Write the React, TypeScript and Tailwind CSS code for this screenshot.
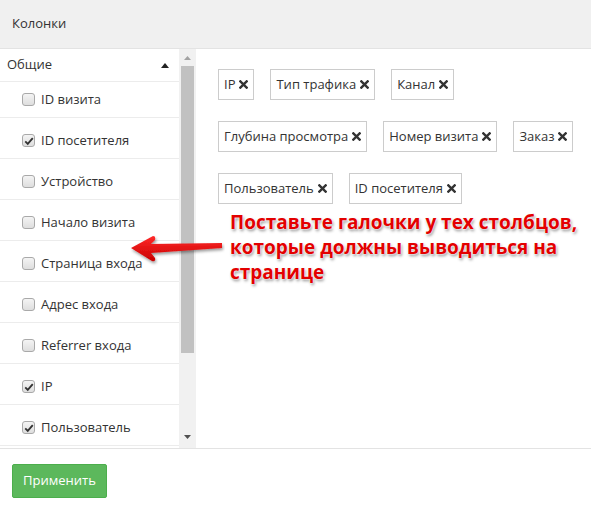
import React from "react";

const font = { fontFamily: '"Open Sans", "Liberation Sans", sans-serif' };

const items: { label: string; checked: boolean }[] = [
  { label: "ID визита", checked: false },
  { label: "ID посетителя", checked: true },
  { label: "Устройство", checked: false },
  { label: "Начало визита", checked: false },
  { label: "Страница входа", checked: false },
  { label: "Адрес входа", checked: false },
  { label: "Referrer входа", checked: false },
  { label: "IP", checked: true },
  { label: "Пользователь", checked: true },
];

const tagRows = [
  ["IP", "Тип трафика", "Канал"],
  ["Глубина просмотра", "Номер визита", "Заказ"],
  ["Пользователь", "ID посетителя"],
];

function Checkbox({ checked }: { checked: boolean }) {
  return (
    <span className="relative flex h-[13px] w-[13px] shrink-0 items-center justify-center rounded-[3px] border border-[#a9a9a9] bg-gradient-to-b from-[#f4f4f4] to-[#dedede]">
      {checked && (
        <svg viewBox="0 0 12 12" className="h-[10px] w-[10px]">
          <path d="M1.5 6.5 L4.5 9.5 L10.5 2.5" fill="none" stroke="#333" strokeWidth="2.2" />
        </svg>
      )}
    </span>
  );
}

function Times() {
  return (
    <svg viewBox="0 0 10 10" className="h-[9px] w-[9px]">
      <path d="M1.5 1.5 L8.5 8.5 M8.5 1.5 L1.5 8.5" stroke="#333" strokeWidth="2.6" strokeLinecap="square" />
    </svg>
  );
}

function Tag({ label }: { label: string }) {
  return (
    <div className="flex h-[31px] items-center gap-[4px] border border-[#cccccc] bg-white px-[5px] text-[13px] text-[#333]">
      <span>{label}</span>
      <Times />
    </div>
  );
}

export default function App() {
  return (
    <div className="relative h-[511px] w-[591px] overflow-hidden bg-white" style={font}>
      <div className="flex h-[49px] items-center border-b border-[#e3e3e3] bg-[#f0f0f0] px-3 text-[13px] text-[#333]">
        Колонки
      </div>

      <div className="flex h-[400px] border-b border-[#e3e3e3]">
        <div className="w-[179px] overflow-hidden">
          <div className="flex h-[33px] items-center justify-between border-b border-[#ececec] pl-[7px] pr-[10px] text-[13px] text-[#333]">
            <span>Общие</span>
            <svg viewBox="0 0 8 5" className="h-[5px] w-[8px]">
              <path d="M0 5 L4 0 L8 5 Z" fill="#222" />
            </svg>
          </div>
          {items.map((it, i) => (
            <div
              key={it.label}
              className={
                i === 0
                  ? "flex h-[36px] items-center gap-[6px] border-b border-[#ececec] pl-[22px] text-[13px] text-[#333]"
                  : "flex h-[41px] items-center gap-[6px] border-b border-[#ececec] pl-[22px] pt-[5px] text-[13px] text-[#333]"
              }
            >
              <Checkbox checked={it.checked} />
              <span>{it.label}</span>
            </div>
          ))}
        </div>

        <div className="flex w-[17px] flex-col items-center bg-[#f1f1f1]">
          <div className="flex h-[17px] w-full items-center justify-center">
            <svg viewBox="0 0 7 4" className="h-[4px] w-[7px]">
              <path d="M0 4 L3.5 0 L7 4 Z" fill="#a3a3a3" />
            </svg>
          </div>
          <div className="h-[287px] w-[13px] bg-[#c1c1c1]" />
          <div className="flex-1" />
          <div className="flex h-[17px] w-full items-center justify-center pb-[6px]">
            <svg viewBox="0 0 7 4" className="h-[4px] w-[7px]">
              <path d="M0 0 L3.5 4 L7 0 Z" fill="#505050" />
            </svg>
          </div>
        </div>

        <div className="flex flex-1 flex-col gap-[21px] pl-[22px] pt-[20px]">
          {tagRows.map((row, i) => (
            <div key={i} className="flex gap-4">
              {row.map((t) => (
                <Tag key={t} label={t} />
              ))}
            </div>
          ))}
        </div>
      </div>

      <div className="px-3 pt-[15px]">
        <button className="flex h-[34px] w-[95px] items-center justify-center rounded-[2px] border border-[#4cae4c] bg-[#5cb85c] text-[13px] text-white">
          Применить
        </button>
      </div>

      <div className="absolute left-[230px] top-[210px] text-[19px] font-bold leading-[25px] text-[#e30000] [text-shadow:0_0_2px_#fff,0_0_2px_#fff,1px_2px_3px_rgba(0,0,0,0.45)]">
        Поставьте галочки у тех столбцов,
        <br />
        которые должны выводиться на
        <br />
        странице
      </div>

      <svg className="absolute left-[125px] top-[230px]" width="100" height="40" viewBox="0 0 100 40">
        <defs>
          <linearGradient id="ar" x1="0" y1="0" x2="0" y2="1">
            <stop offset="0" stopColor="#ff2a2a" />
            <stop offset="1" stopColor="#c80000" />
          </linearGradient>
          <filter id="sh" x="-20%" y="-30%" width="140%" height="170%">
            <feDropShadow dx="1" dy="2" stdDeviation="1.5" floodColor="#000" floodOpacity="0.4" />
          </filter>
        </defs>
        <path
          d="M6 18 L28 6 Q31 6 30 10 L26 14 L97 13 L97 18 L26 23 L30 28 Q31 32 27 31 Z"
          fill="url(#ar)"
          filter="url(#sh)"
        />
      </svg>
    </div>
  );
}
